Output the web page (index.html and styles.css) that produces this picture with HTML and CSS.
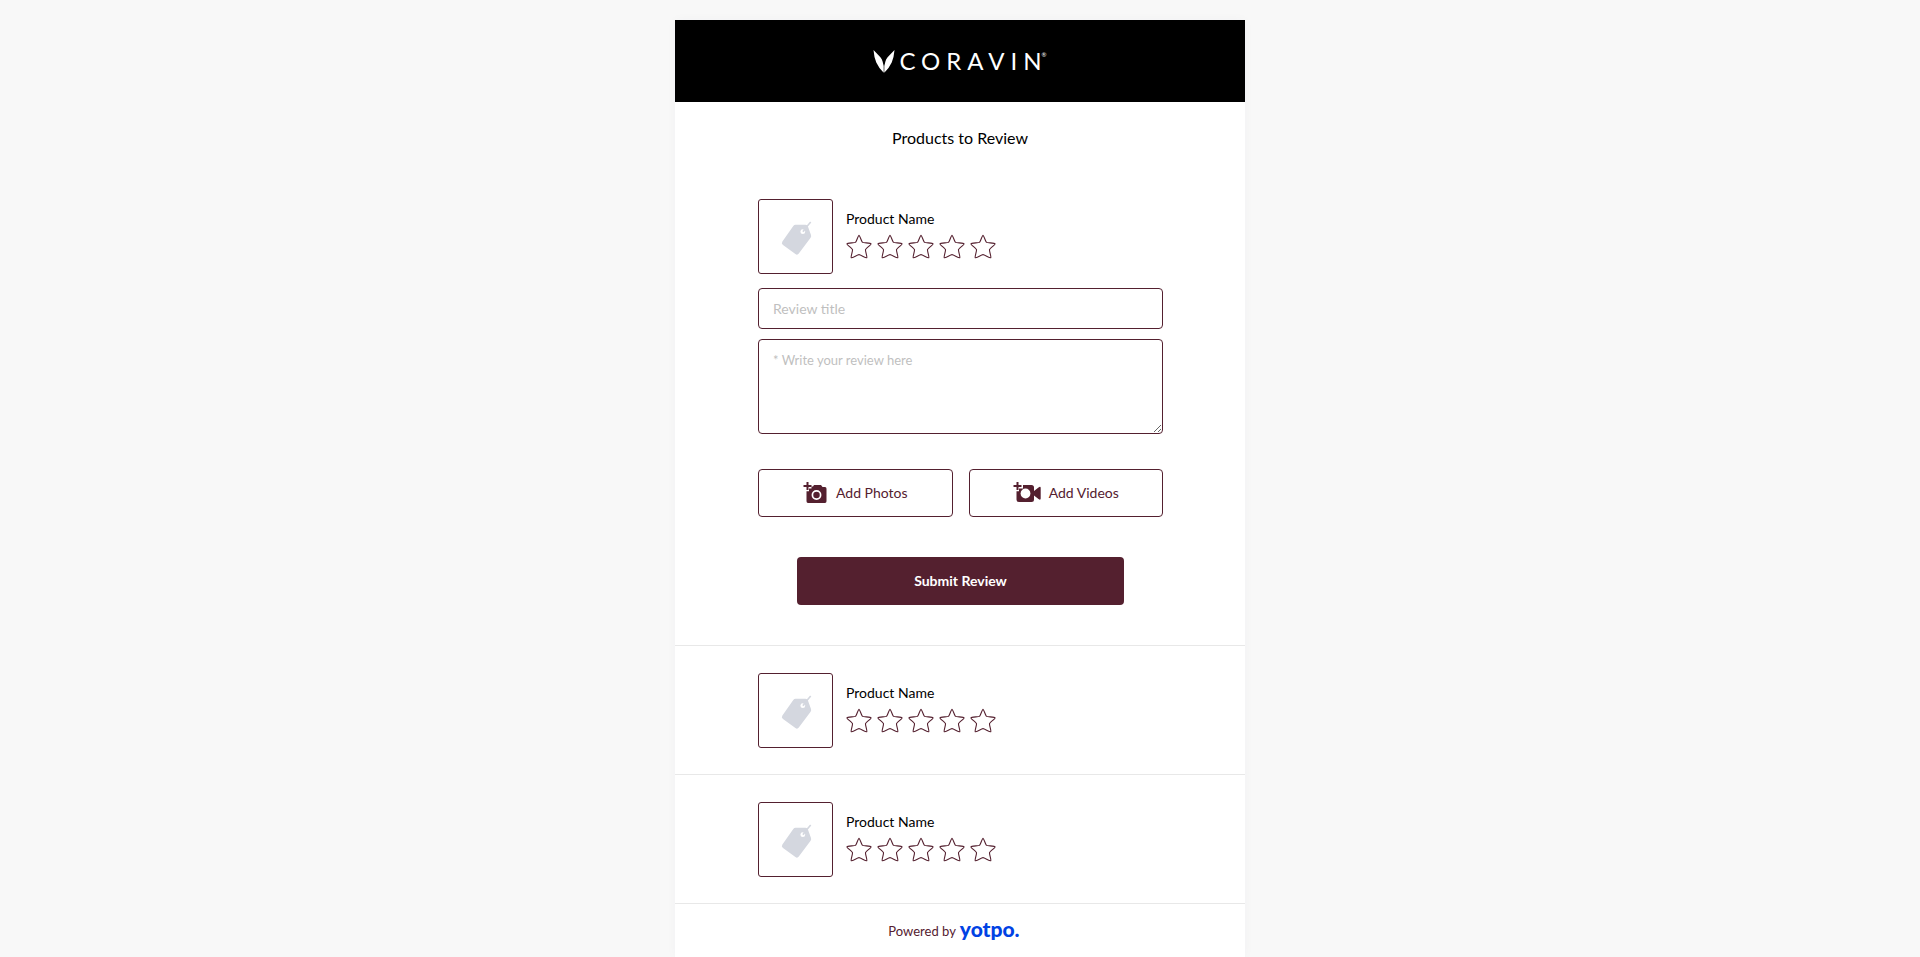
FILE: index.html
```html
<!DOCTYPE html>
<html lang="en">
<head>
<meta charset="utf-8">
<title>Products to Review</title>
<link rel="stylesheet" href="styles.css">
</head>
<body>
<svg width="0" height="0" class="sprite" aria-hidden="true">
  <symbol id="star" viewBox="0 0 26 25">
    <path d="M13 1.2C13.7 1.2 15.6 7.8 16.6 8.4C17.6 9 24.9 8.8 25.1 9.8C25.3 10.6 19.9 14.4 19.5 15.6C19.2 16.8 21.4 23.1 20.8 23.7C20 24.3 14.4 20.6 13 20.6C11.6 20.6 6 24.3 5.2 23.7C4.6 23.1 6.8 16.8 6.5 15.6C6.1 14.4 .7 10.6 .9 9.8C1.1 8.8 8.4 9 9.4 8.4C10.4 7.8 12.3 1.2 13 1.2Z" fill="none" stroke="#54202f" stroke-width="1.1"/>
  </symbol>
  <symbol id="tag" viewBox="0 0 34 38">
    <path d="M15.5 4.7H25.5Q27.4 4.7 28 6.8L31 15Q31.5 16.5 30.6 17.7L18.8 33.6Q17.3 35.5 15.4 34L3 25Q1 23.5 2.4 21.4L13.3 6Q14.2 4.7 15.5 4.7Z" fill="#d4d7df"/>
    <path d="M26.5 7L30.7 1.9" stroke="#d4d7df" stroke-width="1.6" fill="none"/>
    <circle cx="22.8" cy="11.7" r="2.4" fill="#fff"/>
    <path d="M23 11.8L25.8 7.8" stroke="#d4d7df" stroke-width="1.8"/>
  </symbol>
</svg>
<main class="card">
  <header class="brand">
    <svg class="brand-mark" viewBox="0 0 22 23" width="22" height="23" aria-hidden="true">
      <path d="M.5 0L7.4 7.2Q9 9 9.6 11.500L10.700 16V22.800Q5.500 17.500 3.300 12.500Q1 7 .5 0Z" fill="#fff"/>
      <path d="M21.500 0L14.600 7.200Q13 9 12.400 11.500L11.300 16V22.800Q16.500 17.500 18.700 12.500Q21 7 21.500 0Z" fill="#fff"/>
    </svg>
    <span class="brand-name">CORAVI<span class="brand-end">N</span></span><span class="brand-reg">®</span>
  </header>
  <h1 class="title">Products to Review</h1>

  <section class="product product-open">
    <div class="summary">
      <div class="thumb"><svg width="34" height="38"><use href="#tag"/></svg></div>
      <div class="info">
        <h2 class="name">Product Name</h2>
        <div class="stars">
          <button type="button" class="star" aria-label="1 star"><svg width="26" height="25"><use href="#star"/></svg></button>
          <button type="button" class="star" aria-label="2 stars"><svg width="26" height="25"><use href="#star"/></svg></button>
          <button type="button" class="star" aria-label="3 stars"><svg width="26" height="25"><use href="#star"/></svg></button>
          <button type="button" class="star" aria-label="4 stars"><svg width="26" height="25"><use href="#star"/></svg></button>
          <button type="button" class="star" aria-label="5 stars"><svg width="26" height="25"><use href="#star"/></svg></button>
        </div>
      </div>
    </div>
    <form class="review">
      <input class="field" type="text" placeholder="Review title" aria-label="Review title">
      <textarea class="field field-body" placeholder="* Write your review here" aria-label="Write your review here"></textarea>
      <div class="media">
        <button type="button" class="media-button media-photos">
          <svg width="24" height="24" viewBox="0 0 24 24" aria-hidden="true">
            <path d="M10 5.500L11 4H18L19.500 6H22Q23.500 6 23.500 7.700V20.300Q23.500 22 22 22H5Q3.500 22 3.500 20.300V10.300H6V7.500H8.500V5.500Z" fill="#54202f"/>
            <circle cx="13.500" cy="14" r="4.100" fill="none" stroke="#fff" stroke-width="1.700"/>
            <path d="M4.500 1V9M.5 5H8.500" stroke="#54202f" stroke-width="2"/>
          </svg>
          Add Photos
        </button>
        <button type="button" class="media-button media-videos">
          <svg width="28" height="24" viewBox="0 0 28 24" aria-hidden="true">
            <path d="M10 4H18.500Q21 4 21 6.500V10L25.500 6.500Q27.700 5 27.700 7V17.500Q27.700 19.500 25.500 18L21 14.500V18.500Q21 21 18.500 21H6Q3.500 21 3.500 18.500V10.300H6V7.500H10Z" fill="#54202f"/>
            <circle cx="12.500" cy="12.500" r="4.900" fill="#fff"/>
            <path d="M4.500 1V9M.5 5H8.500" stroke="#54202f" stroke-width="2"/>
          </svg>
          Add Videos
        </button>
      </div>
      <button type="submit" class="submit">Submit Review</button>
    </form>
  </section>

  <section class="product">
    <div class="summary">
      <div class="thumb"><svg width="34" height="38"><use href="#tag"/></svg></div>
      <div class="info">
        <h2 class="name">Product Name</h2>
        <div class="stars">
          <button type="button" class="star" aria-label="1 star"><svg width="26" height="25"><use href="#star"/></svg></button>
          <button type="button" class="star" aria-label="2 stars"><svg width="26" height="25"><use href="#star"/></svg></button>
          <button type="button" class="star" aria-label="3 stars"><svg width="26" height="25"><use href="#star"/></svg></button>
          <button type="button" class="star" aria-label="4 stars"><svg width="26" height="25"><use href="#star"/></svg></button>
          <button type="button" class="star" aria-label="5 stars"><svg width="26" height="25"><use href="#star"/></svg></button>
        </div>
      </div>
    </div>
  </section>

  <section class="product">
    <div class="summary">
      <div class="thumb"><svg width="34" height="38"><use href="#tag"/></svg></div>
      <div class="info">
        <h2 class="name">Product Name</h2>
        <div class="stars">
          <button type="button" class="star" aria-label="1 star"><svg width="26" height="25"><use href="#star"/></svg></button>
          <button type="button" class="star" aria-label="2 stars"><svg width="26" height="25"><use href="#star"/></svg></button>
          <button type="button" class="star" aria-label="3 stars"><svg width="26" height="25"><use href="#star"/></svg></button>
          <button type="button" class="star" aria-label="4 stars"><svg width="26" height="25"><use href="#star"/></svg></button>
          <button type="button" class="star" aria-label="5 stars"><svg width="26" height="25"><use href="#star"/></svg></button>
        </div>
      </div>
    </div>
  </section>

  <footer class="powered">Powered by <span class="yotpo">yotpo.</span></footer>
</main>
</body>
</html>
```

FILE: styles.css
```css
* {
  box-sizing: border-box;
}

body {
  margin: 0;
  padding-top: 20px;
  background: #f8f8f8;
  color: #000;
  font-family: Lato, "Open Sans", sans-serif;
  font-size: 14px;
  line-height: 20px;
}

.sprite {
  position: absolute;
}

.card {
  max-width: 570px;
  margin: 0 auto;
  background: #fff;
  box-shadow: 0 0 10px rgba(30, 30, 80, 0.03);
}

.brand {
  display: flex;
  align-items: center;
  justify-content: center;
  height: 82px;
  background: #000;
  color: #fff;
}

.brand-name {
  margin-left: 4px;
  font-size: 24px;
  line-height: 24px;
  letter-spacing: 6px;
}

.brand-end {
  letter-spacing: 0;
}

.brand-reg {
  align-self: flex-start;
  margin-top: 31px;
  font-size: 6px;
  line-height: 8px;
}

.title {
  margin: 0;
  padding: 26px 20px 51px;
  font-size: 16px;
  font-weight: 400;
  line-height: 20px;
  text-align: center;
}

.product {
  padding: 27px 82px 26px 83px;
  border-bottom: 1px solid #e8e8e8;
}

.product-open {
  padding-top: 0;
  padding-bottom: 40px;
}

.summary {
  display: flex;
  align-items: center;
  gap: 13px;
}

.thumb {
  display: flex;
  align-items: center;
  justify-content: center;
  width: 75px;
  height: 75px;
  padding: 4px 0 0 3px;
  border: 1px solid #54202f;
  border-radius: 3px;
}

.info {
  padding-bottom: 6px;
}

.name {
  margin: 0 0 5px;
  font-size: 14px;
  font-weight: 400;
  line-height: 20px;
}

.stars {
  display: flex;
  gap: 5px;
}

.star {
  display: flex;
  padding: 0;
  border: 0;
  background: none;
}

.review {
  display: flex;
  flex-direction: column;
  margin-top: 14px;
}

.field {
  width: 100%;
  height: 41px;
  padding: 10px 14px;
  border: 1px solid #54202f;
  border-radius: 4px;
  background: #fff;
  font: 14px/20px Lato, sans-serif;
}

.field::placeholder {
  color: #bfbfbf;
}

.field-body {
  height: 95px;
  margin-top: 10px;
  font-size: 13px;
}

.media {
  display: grid;
  grid-template-columns: 1fr 1fr;
  gap: 16px;
  margin-top: 35px;
}

.media-button {
  display: flex;
  align-items: center;
  justify-content: center;
  height: 48px;
  border: 1px solid #54202f;
  border-radius: 4px;
  background: #fff;
  color: #54202f;
  font: 14px/20px Lato, sans-serif;
}

.media-photos {
  gap: 9px;
}

.media-videos {
  gap: 8px;
}

.submit {
  height: 48px;
  margin: 40px 39px 0;
  border: 0;
  border-radius: 4px;
  background: #54202f;
  color: #fff;
  font: bold 14px/20px Lato, sans-serif;
}

.powered {
  display: flex;
  align-items: center;
  justify-content: center;
  gap: 4px;
  height: 53px;
  padding-right: 12px;
  color: #54202f;
  font-size: 13px;
}

.yotpo {
  padding-bottom: 4px;
  color: #0042e4;
  font-size: 21px;
  font-weight: 900;
}
```
